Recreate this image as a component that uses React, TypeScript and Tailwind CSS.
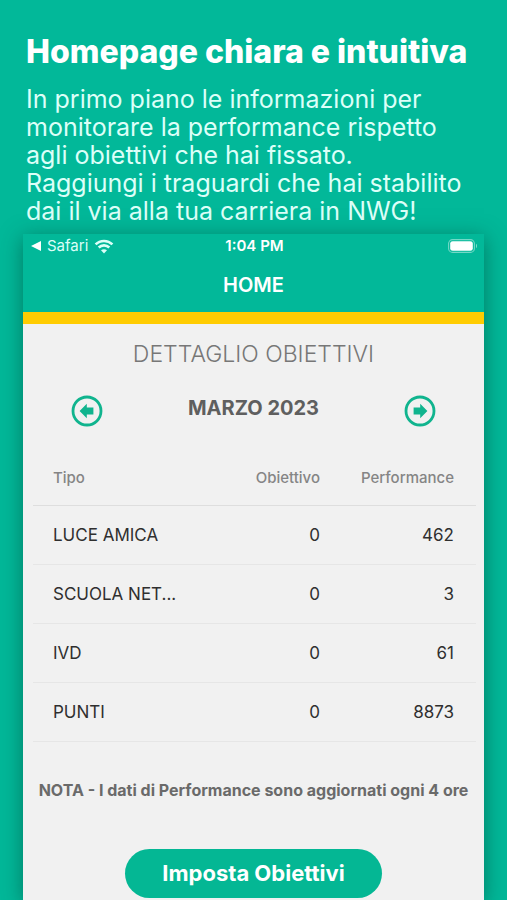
import React, { useState } from "react";

const months = ["FEBBRAIO 2023", "MARZO 2023", "APRILE 2023"];

const rows = [
  { tipo: "LUCE AMICA", obiettivo: 0, performance: 462 },
  { tipo: "SCUOLA NET...", obiettivo: 0, performance: 3 },
  { tipo: "IVD", obiettivo: 0, performance: 61 },
  { tipo: "PUNTI", obiettivo: 0, performance: 8873 },
];

function WifiIcon() {
  return (
    <svg viewBox="0 0 20 15" className="w-5 h-[15px]" fill="none" stroke="currentColor" strokeWidth="2.6" aria-hidden="true">
      <path d="M1.6 5.4C6.2 0.8 13.8 0.8 18.4 5.4" />
      <path d="M4.7 8.5C7.6 5.6 12.4 5.6 15.3 8.5" />
      <path d="M10 14.4L7 11.3C8.7 9.8 11.3 9.8 13 11.3Z" fill="currentColor" stroke="none" />
    </svg>
  );
}

function BatteryIcon() {
  return (
    <svg viewBox="0 0 30 14" className="w-[30px] h-3.5" fill="none" aria-hidden="true">
      <rect x="0.6" y="0.6" width="25.8" height="12.8" rx="4" stroke="white" strokeOpacity="0.45" strokeWidth="1.1" />
      <rect x="2.2" y="2.2" width="22.6" height="9.6" rx="2.4" fill="white" />
      <path d="M28 4.8C29.4 5.4 29.4 8.6 28 9.2Z" fill="white" fillOpacity="0.5" />
    </svg>
  );
}

function ArrowCircle({ flip = false }: { flip?: boolean }) {
  return (
    <svg viewBox="0 0 32 32" className={`w-8 h-8 ${flip ? "rotate-180" : ""}`} fill="none" aria-hidden="true">
      <circle cx="16" cy="16" r="14" stroke="currentColor" strokeWidth="2.8" />
      <path d="M8.6 16L15.8 8.8V12.4H22.4V19.6H15.8V23.2Z" fill="currentColor" />
    </svg>
  );
}

export default function App() {
  const [month, setMonth] = useState(1);

  return (
    <div className="min-h-screen flex flex-col overflow-hidden bg-[#02b899] font-['Inter','Liberation_Sans',sans-serif]">
      <header className="px-[26px] pt-8 pb-[9px] text-white">
        <h1 className="text-[32px] leading-10 font-extrabold whitespace-nowrap">Homepage chiara e intuitiva</h1>
        <p className="mt-[13px] text-[25px] leading-7 font-normal whitespace-nowrap text-[#dcfff8]">
          In primo piano le informazioni per
          <br />
          monitorare la performance rispetto
          <br />
          agli obiettivi che hai fissato.
          <br />
          Raggiungi i traguardi che hai stabilito
          <br />
          dai il via alla tua carriera in NWG!
        </p>
      </header>

      <main className="flex-1 flex flex-col mx-[23px] bg-[#f1f1f1] shadow-[0_4px_20px_rgba(0,60,45,0.5)]">
        <div className="bg-[#02b899] text-white border-b-12 border-[#ffcc02]">
          <div className="grid grid-cols-3 items-center h-6 pl-2 pr-1.5">
            <div className="flex items-center gap-1.5 text-[15px] text-[#dcfff8]">
              <svg viewBox="0 0 10 10" className="w-2.5 h-2.5" fill="white" aria-hidden="true">
                <path d="M0 5L10 0V10Z" />
              </svg>
              Safari
              <WifiIcon />
            </div>
            <span className="text-[15px] font-semibold text-center">1:04 PM</span>
            <div className="flex justify-end">
              <BatteryIcon />
            </div>
          </div>
          <h2 className="h-[54px] flex items-center justify-center text-xl font-semibold">HOME</h2>
        </div>

        <h3 className="mt-3.5 text-center text-[23px] leading-8 font-light text-[#777777]">DETTAGLIO OBIETTIVI</h3>

        <div className="mt-6 px-12 flex items-start justify-between">
          <button
            aria-label="Mese precedente"
            className="mt-px text-[#10b48e]"
            onClick={() => setMonth(Math.max(0, month - 1))}
          >
            <ArrowCircle />
          </button>
          <span className="text-xl leading-7 font-bold text-[#5f5f5f]">{months[month]}</span>
          <button
            aria-label="Mese successivo"
            className="mt-px text-[#10b48e]"
            onClick={() => setMonth(Math.min(months.length - 1, month + 1))}
          >
            <ArrowCircle flip />
          </button>
        </div>

        <div className="mt-6 pl-2.5 pr-2">
          <table className="w-full table-fixed whitespace-nowrap text-[#2f2f2f]">
            <thead>
              <tr className="h-[54px] border-b border-[#dedede] text-[15px] text-[#858585]">
                <th className="pl-5 text-left font-medium">Tipo</th>
                <th className="w-28 text-right font-medium">Obiettivo</th>
                <th className="w-[156px] pr-[22px] text-right font-medium">Performance</th>
              </tr>
            </thead>
            <tbody>
              {rows.map((row) => (
                <tr key={row.tipo} className="h-[59px] border-b border-[#e6e6e6] text-[17px]">
                  <td className="pt-0.5 pl-5">{row.tipo}</td>
                  <td className="pt-0.5 text-right">{row.obiettivo}</td>
                  <td className="pt-0.5 pr-[22px] text-right">{row.performance}</td>
                </tr>
              ))}
            </tbody>
          </table>
        </div>

        <p className="mt-9 text-center text-base leading-6 font-bold whitespace-nowrap text-[#6a6a6a]">
          NOTA - I dati di Performance sono aggiornati ogni 4 ore
        </p>

        <div className="mt-[47px] flex justify-center">
          <button className="w-[257px] h-[49px] rounded-full bg-[#04b794] text-[22px] font-bold text-white">Imposta Obiettivi</button>
        </div>
      </main>
    </div>
  );
}
